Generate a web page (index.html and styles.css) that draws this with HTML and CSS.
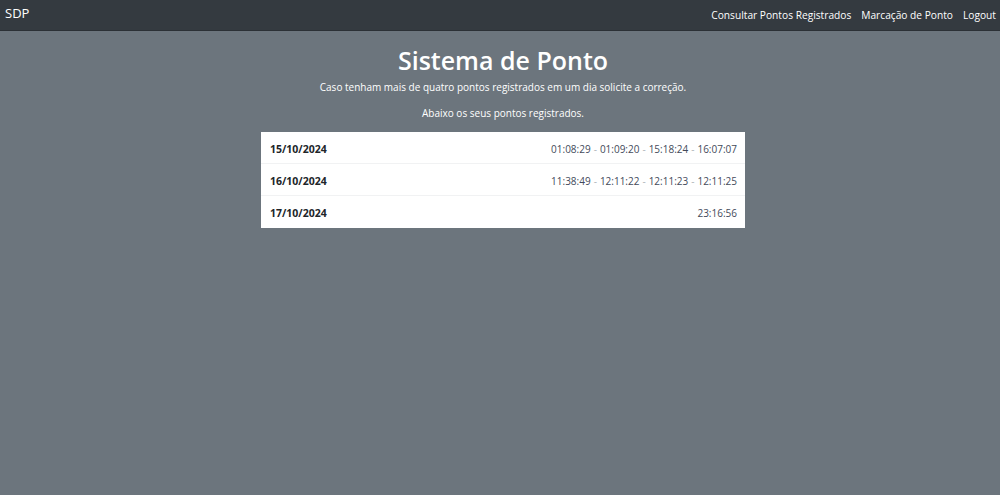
FILE: index.html
```html
<!DOCTYPE html>
<html lang="pt-BR">
<head>
<meta charset="utf-8">
<title>Sistema de Ponto</title>
<link rel="stylesheet" href="styles.css">
</head>
<body>
<nav class="navbar">
  <a class="brand" href="#">SDP</a>
  <ul class="nav-links">
    <li><a href="#">Consultar Pontos Registrados</a></li>
    <li><a href="#">Marcação de Ponto</a></li>
    <li><a href="#">Logout</a></li>
  </ul>
</nav>
<main class="content">
  <h1 class="title">Sistema de Ponto</h1>
  <p class="note">Caso tenham mais de quatro pontos registrados em um dia solicite a correção.</p>
  <p class="note sub">Abaixo os seus pontos registrados.</p>
  <ul class="list">
    <li class="row"><span class="date">15/10/2024</span><span class="times"><span class="t">01:08:29</span><span class="sep">-</span><span class="t">01:09:20</span><span class="sep">-</span><span class="t">15:18:24</span><span class="sep">-</span><span class="t">16:07:07</span></span></li>
    <li class="row"><span class="date">16/10/2024</span><span class="times"><span class="t">11:38:49</span><span class="sep">-</span><span class="t">12:11:22</span><span class="sep">-</span><span class="t">12:11:23</span><span class="sep">-</span><span class="t">12:11:25</span></span></li>
    <li class="row"><span class="date">17/10/2024</span><span class="times"><span class="t">23:16:56</span></span></li>
  </ul>
</main>
</body>
</html>
```
FILE: styles.css
```css
* { box-sizing: border-box; }
html, body { height: 100%; }
body {
  margin: 0;
  background: #6c757d;
  font-family: "Open Sans", "Noto Sans", sans-serif;
  color: #fff;
}
.navbar {
  height: 31px;
  background: #343a40;
  border-bottom: 1px solid #2b3035;
  display: flex;
  align-items: center;
  justify-content: space-between;
  padding: 0 4px 5px 5px;
}
.brand {
  color: #fff;
  text-decoration: none;
  font-size: 13px;
}
.nav-links {
  list-style: none;
  margin: 0;
  padding: 0;
  display: flex;
  gap: 10px;
}
.nav-links a {
  color: #fff;
  text-decoration: none;
  font-size: 10.2px;
}
.content {
  display: flex;
  flex-direction: column;
  align-items: center;
  padding-left: 6px;
}
.title {
  margin: 12px 0 0;
  font-size: 25px;
  font-weight: 600;
  line-height: 34px;
}
.note {
  margin: 2px 0 0;
  font-size: 10px;
  line-height: 16px;
}
.note.sub { margin-top: 10px; }
.list {
  list-style: none;
  margin: 11px 0 0;
  padding: 0;
  width: 484px;
  background: #fff;
}
.row {
  height: 32px;
  display: flex;
  align-items: center;
  justify-content: space-between;
  padding: 2px 8px 0 9px;
  border-bottom: 1px solid #f1f2f3;
  font-size: 10px;
}
.row:last-child { border-bottom: none; }
.date {
  font-weight: 700;
  font-size: 10.5px;
  color: #212529;
}
.times {
  display: flex;
  gap: 3px;
  color: #434a5a;
}
.sep { color: #b0b5ba; }
```
